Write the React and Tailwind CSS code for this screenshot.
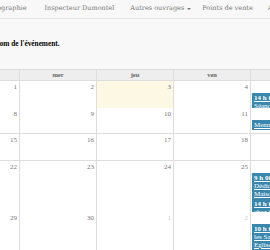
const navItems = ['Bibliographie', 'Inspecteur Dumontel', 'Autres ouvrages', 'Points de vente', 'Agenda'];

const days = ['lun', 'mar', 'mer', 'jeu', 'ven', 'sam', 'dim'];

const weeks = [
  { h: 'h-[27px]', cells: [[31, true], [1], [2], [3, false, true], [4], [5], [6]] },
  { h: 'h-[26px]', cells: [[7], [8], [9], [10], [11], [12], [13]] },
  { h: 'h-[27px]', cells: [[14], [15], [16], [17], [18], [19], [20]] },
  { h: 'h-[51px]', cells: [[21], [22], [23], [24], [25], [26], [27]] },
  { h: 'h-[34px]', cells: [[28], [29], [30], [1, true], [2, true], [3, true], [4, true]] },
];

// events sit in the "sam" column (index 5)
const events = {
  0: [{ time: '14 h 00', lines: ['Séance de dédicace'] }],
  1: [{ time: null, lines: ['Mennonites'] }],
  3: [
    { time: '9 h 00', lines: ['Dédicace', 'Maison de la presse'] },
    { time: '14 h 00', lines: ['chez Cultura'] },
  ],
  4: [{ time: '10 h 00', lines: ['les Saveurs', 'Eglise'] }],
};

const serif = { fontFamily: '"Liberation Serif", serif' };

function Event({ ev }) {
  return (
    <div className="bg-[#3a87ad] border border-[#3a87ad] text-white leading-[8px] text-[7px] pl-[1px] whitespace-nowrap overflow-hidden">
      {ev.time && <div className="font-bold underline">{ev.time}</div>}
      {ev.lines.map(l => (
        <div key={l} className="underline">{l}</div>
      ))}
    </div>
  );
}

export default function App() {
  return (
    <div className="w-[270px] h-[250px] overflow-hidden bg-white" style={{ fontFamily: '"DejaVu Serif", serif' }}>
      {/* Navbar */}
      <div className="h-[19px] bg-[#f8f8f8] border-b border-[#e7e7e7] flex items-center text-[6.5px] text-[#777] whitespace-nowrap">
        <span className="ml-[-18px]">{navItems[0]}</span>
        <span className="ml-[18px]">{navItems[1]}</span>
        <span className="ml-[16px] flex items-center gap-[3px]">
          {navItems[2]}
          <span className="inline-block border-x-[2px] border-t-[2px] border-x-transparent border-t-[#777]" />
        </span>
        <span className="ml-[11px]">{navItems[3]}</span>
        <span className="ml-[15px]">{navItems[4]}</span>
      </div>

      {/* Intro */}
      <div className="h-[50px] bg-[#f8f8f8] flex items-center whitespace-nowrap" style={serif}>
        <p className="ml-[-49px] text-[7.3px] font-bold text-black">Cliquez sur le nom de l'événement.</p>
      </div>

      {/* Calendar */}
      <div className="ml-[-135px] w-[539px] text-[7px]" style={serif}>
        <div className="grid grid-cols-[repeat(7,77px)] h-[12px] bg-[#eee] border-y border-[#ddd]">
          {days.map((d, i) => (
            <div key={d} className={`flex items-center justify-center font-bold text-[#666] text-[6.5px] ${i > 0 ? 'border-l border-[#ddd]' : ''}`}>
              {d}
            </div>
          ))}
        </div>
        {weeks.map((w, wi) => (
          <div key={wi} className={`grid grid-cols-[repeat(7,77px)] ${w.h} border-b border-[#ddd]`}>
            {w.cells.map(([n, other, today], ci) => (
              <div
                key={ci}
                className={`flex flex-col ${ci > 0 ? 'border-l border-[#ddd]' : ''} ${today ? 'bg-[#fcf8e3]' : 'bg-white'}`}
              >
                <div className={`text-right pr-[2px] pt-[2px] leading-[8px] ${other ? 'text-[#ccc]' : 'text-[#777]'}`}>{n}</div>
                {ci === 5 && events[wi] && (
                  <div className="mt-[2px] pl-[1px] flex flex-col">
                    {events[wi].map((ev, k) => <Event key={k} ev={ev} />)}
                  </div>
                )}
              </div>
            ))}
          </div>
        ))}
      </div>
    </div>
  );
}
